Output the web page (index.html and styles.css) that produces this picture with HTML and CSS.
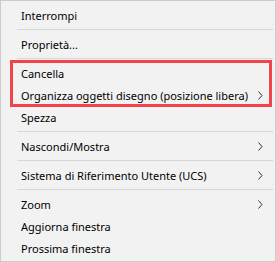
FILE: index.html
```html
<!DOCTYPE html>
<html lang="it">
<head>
    <meta charset="UTF-8">
    <title>Menu contestuale</title>
    <link rel="stylesheet" href="styles.css">
</head>
<body>
    <div class="menu">
        <div class="item">Interrompi</div>
        <div class="sep"></div>
        <div class="item">Proprietà...</div>
        <div class="sep"></div>
        <div class="item">Cancella</div>
        <div class="item">Organizza oggetti disegno (posizione libera)
            <svg class="arrow" width="5" height="9" viewBox="0 0 5 9"><polyline points="0.5,0.5 4,4.5 0.5,8.5" fill="none" stroke="#333" stroke-width="1"/></svg>
        </div>
        <div class="item">Spezza</div>
        <div class="sep"></div>
        <div class="item">Nascondi/Mostra
            <svg class="arrow" width="5" height="9" viewBox="0 0 5 9"><polyline points="0.5,0.5 4,4.5 0.5,8.5" fill="none" stroke="#333" stroke-width="1"/></svg>
        </div>
        <div class="sep"></div>
        <div class="item">Sistema di Riferimento Utente (UCS)
            <svg class="arrow" width="5" height="9" viewBox="0 0 5 9"><polyline points="0.5,0.5 4,4.5 0.5,8.5" fill="none" stroke="#333" stroke-width="1"/></svg>
        </div>
        <div class="sep"></div>
        <div class="item">Zoom
            <svg class="arrow" width="5" height="9" viewBox="0 0 5 9"><polyline points="0.5,0.5 4,4.5 0.5,8.5" fill="none" stroke="#333" stroke-width="1"/></svg>
        </div>
        <div class="item">Aggiorna finestra</div>
        <div class="item">Prossima finestra</div>

        <!-- riquadro rosso di evidenziazione -->
        <div class="highlight"></div>
    </div>
</body>
</html>
```

FILE: styles.css
```css
body {
    margin: 0;
    font-family: "Noto Sans", "Open Sans", sans-serif;
    font-size: 11px;
    background-color: #f2f2f2;
}

.menu {
    position: relative;
    width: 274px;
    height: 255px;
    padding: 3px 0 2px 0;
    border: 1px solid #cccccc;
    background-color: #f2f2f2;
    color: #000;
}

.item {
    display: flex;
    align-items: center;
    justify-content: space-between;
    height: 22px;
    padding-left: 20px;
    padding-right: 12px;
    white-space: nowrap;
}

.arrow {
    display: block;
}

.sep {
    height: 1px;
    margin: 3px 2px 3px 16px;
    background-color: #d7d7d7;
}

.highlight {
    position: absolute;
    left: 9px;
    top: 59px;
    width: 256px;
    height: 41px;
    border: 3px solid #f2434b;
}
```
